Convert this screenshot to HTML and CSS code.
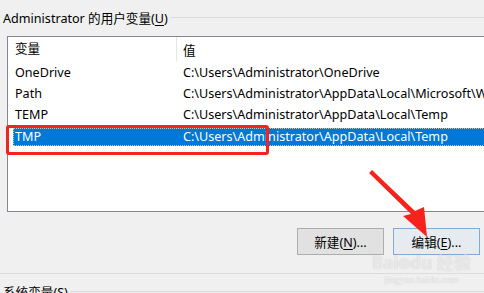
FILE: index.html
```html
<!DOCTYPE html>
<html lang="en">
<head>
    <meta charset="UTF-8">
    <title>环境变量</title>
    <link rel="stylesheet" href="styles.css">
</head>
<body>
    <div class="group">
        <div class="group-title">
            <span>Administrator 的用户变量(<u>U</u>)</span>
            <div class="group-line"></div>
        </div>

        <div class="list">
            <div class="list-head">
                <div class="col-name">变量</div>
                <div class="col-value">值</div>
            </div>
            <div class="row">
                <div class="col-name">OneDrive</div>
                <div class="col-value">C:\Users\Administrator\OneDrive</div>
            </div>
            <div class="row">
                <div class="col-name">Path</div>
                <div class="col-value">C:\Users\Administrator\AppData\Local\Microsoft\WindowsApps;</div>
            </div>
            <div class="row">
                <div class="col-name">TEMP</div>
                <div class="col-value">C:\Users\Administrator\AppData\Local\Temp</div>
            </div>
            <div class="row selected">
                <div class="col-name">TMP</div>
                <div class="col-value">C:\Users\Administrator\AppData\Local\Temp</div>
            </div>
        </div>

        <div class="buttons">
            <button class="btn">新建(<u>N</u>)...</button>
            <button class="btn btn-hover">编辑(<u>E</u>)...</button>
        </div>
    </div>

    <div class="group-title second">
        <span>系统变量(<u>S</u>)</span>
        <div class="group-line"></div>
    </div>

    <!-- annotations drawn over the screenshot -->
    <div class="mark-box"></div>
    <svg class="mark-arrow" width="484" height="293" viewBox="0 0 484 293">
        <polygon points="369,173 372,170 415,211 424,207 427,237 403,216 411,214" fill="#f5231b"/>
    </svg>
    <div class="watermark">
        <span class="wm-logo">Bai<span class="paw">●</span>du 经验</span>
        <span class="wm-url">jingyan.baidu.com</span>
    </div>
</body>
</html>
```

FILE: styles.css
```css
* {
    box-sizing: border-box;
}
body {
    margin: 0;
    width: 484px;
    height: 293px;
    overflow: hidden;
    background-color: #f0f0f0;
    font-family: 'Noto Sans', 'Noto Sans CJK SC', sans-serif;
    font-size: 12.6px;
    color: #000;
    position: relative;
}
u {
    text-decoration-thickness: 1px;
    text-underline-offset: 2px;
}
.group {
    border-bottom: 1px solid #dcdcdc;
    height: 274px;
}
.group-title {
    display: flex;
    align-items: center;
    height: 26px;
    padding: 8px 0 0 3px;
    white-space: nowrap;
}
.group-title span {
    padding-right: 2px;
}
.group-line {
    flex: 1;
    height: 1px;
    background-color: #dcdcdc;
}
.list {
    margin: 10px 0 0 7px;
    width: 520px;
    height: 176px;
    background-color: #fff;
    border: 1px solid #828790;
    border-right: none;
    overflow: hidden;
}
.list-head, .row {
    display: flex;
    white-space: nowrap;
}
.list-head {
    height: 24px;
    align-items: center;
    margin-bottom: 1px;
}
.col-name {
    width: 175px;
    padding-left: 7px;
    flex-shrink: 0;
}
.list-head .col-name {
    width: 169px;
    border-right: 1px solid #e5e5e5;
    height: 24px;
    line-height: 24px;
    margin-right: 6px;
}
.row {
    height: 21px;
    line-height: 21px;
}
.row.selected {
    margin: 3px 0 0 5px;
    height: 18px;
    line-height: 18px;
    background-color: #0078d7;
    color: #fff;
    outline: 1px dotted #f0c070;
    outline-offset: -1px;
}
.row.selected .col-name {
    width: 170px;
    padding-left: 2px;
}
.buttons {
    display: flex;
    justify-content: flex-end;
    gap: 9px;
    padding: 16px 4px 0 0;
}
.btn {
    width: 87px;
    height: 27px;
    font-family: inherit;
    font-size: 12.6px;
    color: #000;
    background-color: #e1e1e1;
    border: 1px solid #adadad;
    padding: 0;
}
.btn-hover {
    background-color: #e5ebf1;
    border-color: #86a9cf;
}
.group-title.second {
    height: 24px;
    padding-top: 10px;
}
.mark-box {
    position: absolute;
    left: 6px;
    top: 125px;
    width: 263px;
    height: 30px;
    border: 3px solid #f5231b;
    border-radius: 3px;
}
.mark-arrow {
    position: absolute;
    left: 0;
    top: 0;
}
.watermark {
    position: absolute;
    left: 372px;
    top: 253px;
    display: flex;
    flex-direction: column;
    align-items: center;
    color: rgba(255, 255, 255, 0.6);
    text-shadow: 0 0 1px rgba(140, 140, 140, 0.45);
    pointer-events: none;
}
.wm-logo {
    font-size: 17px;
    line-height: 19px;
    font-weight: bold;
}
.paw {
    font-size: 12px;
}
.wm-url {
    font-size: 10px;
    line-height: 11px;
    font-family: 'Liberation Serif', serif;
}
```
